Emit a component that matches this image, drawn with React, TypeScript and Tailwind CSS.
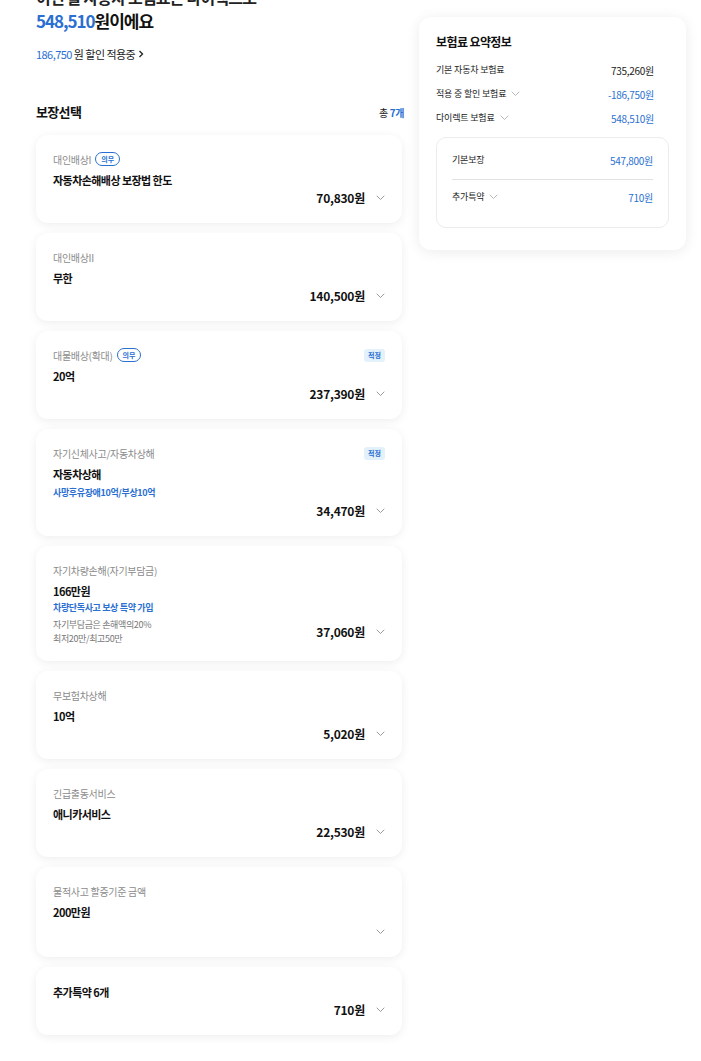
import { ReactNode } from "react";

// coverage card data
interface Coverage {
  label?: string;
  must?: boolean;
  fit?: boolean;
  title: string;
  sub?: string;
  notes?: string[];
  price?: string;
}

const coverages: Coverage[] = [
  { label: "대인배상I", must: true, title: "자동차손해배상 보장법 한도", price: "70,830원" },
  { label: "대인배상II", title: "무한", price: "140,500원" },
  { label: "대물배상(확대)", must: true, fit: true, title: "20억", price: "237,390원" },
  {
    label: "자기신체사고/자동차상해",
    fit: true,
    title: "자동차상해",
    sub: "사망후유장애10억/부상10억",
    price: "34,470원",
  },
  {
    label: "자기차량손해(자기부담금)",
    title: "166만원",
    sub: "차량단독사고 보상 특약 가입",
    notes: ["자기부담금은 손해액의20%", "최저20만/최고50만"],
    price: "37,060원",
  },
  { label: "무보험차상해", title: "10억", price: "5,020원" },
  { label: "긴급출동서비스", title: "애니카서비스", price: "22,530원" },
  { label: "물적사고 할증기준 금액", title: "200만원" },
  { title: "추가특약 6개", price: "710원" },
];

const Chevron = ({ className = "" }: { className?: string }) => (
  <svg width="9" height="6" viewBox="0 0 9 6" fill="none" className={className}>
    <path d="M1 1l3.5 3.5L8 1" stroke="currentColor" strokeWidth="1" strokeLinecap="round" strokeLinejoin="round" />
  </svg>
);

const Card = ({ children, tight }: { children: ReactNode; tight?: boolean }) => (
  <div
    className={`bg-white rounded-[12px] shadow-[0_2px_10px_rgba(0,0,0,0.07)] pt-[16px] pl-[17px] pr-[17px] ${
      tight ? "pb-[15px]" : "pb-[16px]"
    }`}
  >
    {children}
  </div>
);

const CoverageCard = ({ c }: { c: Coverage }) => (
  <Card tight={!!c.notes}>
    {c.label && (
      <div className="flex items-center justify-between h-[16px]">
        <div className="flex items-center gap-[4px]">
          <span className="text-[10px] text-[#8b8b8b] tracking-[-0.03em]">{c.label}</span>
          {c.must && (
            <span className="border border-[#2a6fd1] rounded-full px-[5px] h-[14px] leading-[12px] text-[7px] font-bold text-[#2a6fd1]">
              의무
            </span>
          )}
        </div>
        {c.fit && (
          <span className="bg-[#e3f1fb] rounded-[3px] px-[4px] h-[13px] leading-[13px] text-[7px] font-bold text-[#2a6fd1]">
            적정
          </span>
        )}
      </div>
    )}
    <p className={`${c.label ? "mt-[4px]" : ""} text-[11px] font-bold leading-[18px] tracking-[-0.05em] text-[#111]`}>
      {c.title}
    </p>
    {c.sub && (
      <p
        className={`text-[9px] font-bold leading-[14px] tracking-[-0.04em] text-[#2a6fd1] ${
          c.notes ? "mt-[1px]" : "mt-[3px]"
        }`}
      >
        {c.sub}
      </p>
    )}
    <div
      className={`flex items-center justify-between ${
        c.notes ? "mt-[3px]" : c.sub ? "mt-[2px]" : c.price ? "" : "mt-[2px]"
      }`}
    >
      <div className="text-[9px] leading-[14px] text-[#777] tracking-[-0.04em]">
        {c.notes?.map((n) => (
          <p key={n}>{n}</p>
        ))}
      </div>
      <div className="flex items-center h-[18px]">
        <span className="text-[12px] font-bold tracking-[-0.02em] text-[#111]">{c.price}</span>
        <Chevron className="ml-[11px] text-[#9a9a9a]" />
      </div>
    </div>
  </Card>
);

const SummaryRow = ({
  label,
  value,
  chevron,
  blue,
}: {
  label: string;
  value: string;
  chevron?: boolean;
  blue?: boolean;
}) => (
  <div className="flex items-center justify-between h-[24px]">
    <div className="flex items-center gap-[5px] text-[9px] text-[#222] tracking-[-0.02em]">
      {label}
      {chevron && <Chevron className="text-[#b8b8b8]" />}
    </div>
    <span className={`text-[10px] tracking-[-0.03em] ${blue ? "text-[#2a6fd1]" : "text-[#222]"}`}>{value}</span>
  </div>
);

const App = () => {
  return (
    <div
      className="w-[701px] h-[1061px] overflow-hidden bg-white flex gap-[17px] pl-[36px]"
      style={{ fontFamily: '"Noto Sans CJK KR", "Noto Sans", sans-serif' }}
    >
      {/* left column */}
      <div className="w-[366px] shrink-0">
        <div className="h-[9px] overflow-hidden">
          <p className="-mt-[14px] text-[16px] font-bold leading-[22px] text-[#222] tracking-[-0.05em]">
            이번 달 자동차 보험료는 다이렉트로
          </p>
        </div>
        <p className="text-[17px] font-bold leading-[24px] tracking-[-0.06em] text-[#111]">
          <span className="text-[#2a6fd1]">548,510</span>원이에요
        </p>
        <p className="mt-[13px] text-[11px] leading-[16px] tracking-[-0.05em] text-[#222] flex items-center gap-[2px]">
          <span className="text-[#2a6fd1]">186,750</span>원 할인 적용중
          <svg width="6" height="8" viewBox="0 0 6 8" className="ml-[1px]">
            <path d="M1.5 1l3 3-3 3" stroke="#222" strokeWidth="1.3" fill="none" />
          </svg>
        </p>
        <div className="mt-[40px] flex items-center justify-between h-[20px]">
          <h2 className="text-[13px] font-bold tracking-[-0.05em] text-[#111]">보장선택</h2>
          <span className="text-[10px] text-[#222] tracking-[-0.04em] -mr-[2px]">
            총 <span className="font-bold text-[#2a6fd1]">7개</span>
          </span>
        </div>
        <div className="mt-[13px] flex flex-col gap-[10px]">
          {coverages.map((c, i) => (
            <CoverageCard key={i} c={c} />
          ))}
        </div>
      </div>

      {/* right column */}
      <div className="w-[267px] shrink-0 pt-[17px]">
        <div className="bg-white rounded-[12px] shadow-[0_2px_14px_rgba(0,0,0,0.08)] px-[17px] pt-[14px] pb-[22px]">
          <h3 className="text-[12px] font-bold tracking-[-0.05em] text-[#111] leading-[22px]">보험료 요약정보</h3>
          <div className="mt-[5px] pr-[15px]">
            <SummaryRow label="기본 자동차 보험료" value="735,260원" />
            <SummaryRow label="적용 중 할인 보험료" value="-186,750원" chevron blue />
            <SummaryRow label="다이렉트 보험료" value="548,510원" chevron blue />
          </div>
          <div className="mt-[7px] border border-[#ececec] rounded-[10px] px-[15px] pt-[10px] pb-[18px]">
            <SummaryRow label="기본보장" value="547,800원" blue />
            <div className="mt-[7px] mb-[5px] border-t border-[#e2e2e2]" />
            <SummaryRow label="추가특약" value="710원" chevron blue />
          </div>
        </div>
      </div>
    </div>
  );
};

export default App;
